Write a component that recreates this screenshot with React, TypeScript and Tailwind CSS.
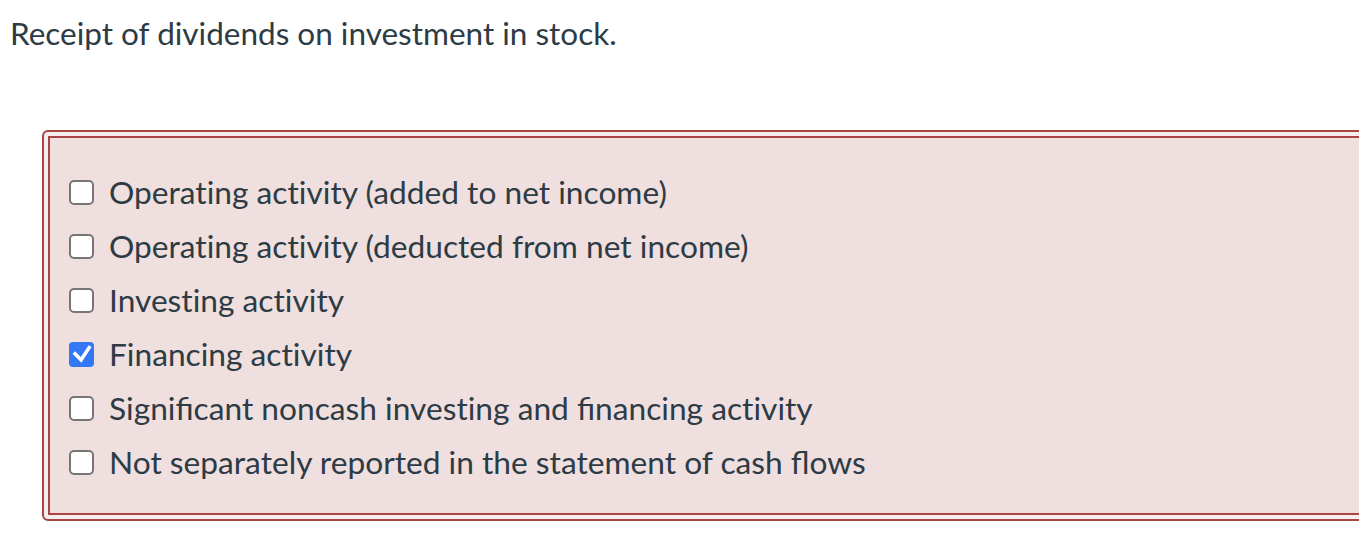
import React from "react";

const options = [
  { label: "Operating activity (added to net income)", checked: false },
  { label: "Operating activity (deducted from net income)", checked: false },
  { label: "Investing activity", checked: false },
  { label: "Financing activity", checked: true },
  { label: "Significant noncash investing and financing activity", checked: false },
  { label: "Not separately reported in the statement of cash flows", checked: false },
];

// the reference font has no "ti" ligature, keep fi/fl
const noTi = (s: string) => s.replace(/ti/g, "t\u200Ci");

function Box({ checked }: { checked: boolean }) {
  if (checked) {
    return (
      <span className="flex h-[25px] w-[25px] shrink-0 items-center justify-center rounded-[4px] bg-[#3478f6]">
        <svg viewBox="0 0 16 16" className="h-[25px] w-[25px]" fill="none">
          <path d="M3.9 7.6l3.8 3.9L12.9 3.6" stroke="#fff" strokeWidth="2.3" strokeLinecap="square" />
        </svg>
      </span>
    );
  }
  return <span className="h-[25px] w-[25px] shrink-0 rounded-[5px] border-2 border-[#767676] bg-white" />;
}

export default function App() {
  return (
    <div className="h-[539px] w-full overflow-hidden bg-white font-['Lato',sans-serif] text-[#2d3b45]">
      <p className="pl-[10px] pt-[14px] text-[31.5px] leading-[38px]">
        Receipt of dividends on investment in stock.
      </p>

      <div className="ml-[42px] mt-[78px] w-[1340px] rounded-[6px] border-2 border-[#a94442] bg-[#f6eded] p-[4px]">
        <div className="border-2 border-[#a94442] bg-[#efdfdf] pb-[24px] pl-[19px] pt-[27px]">
          {options.map((opt) => (
            <label key={opt.label} className="flex h-[54px] items-center gap-[15px]">
              <Box checked={opt.checked} />
              <span className="text-[31.7px] leading-[38px]">{noTi(opt.label)}</span>
            </label>
          ))}
        </div>
      </div>
    </div>
  );
}
